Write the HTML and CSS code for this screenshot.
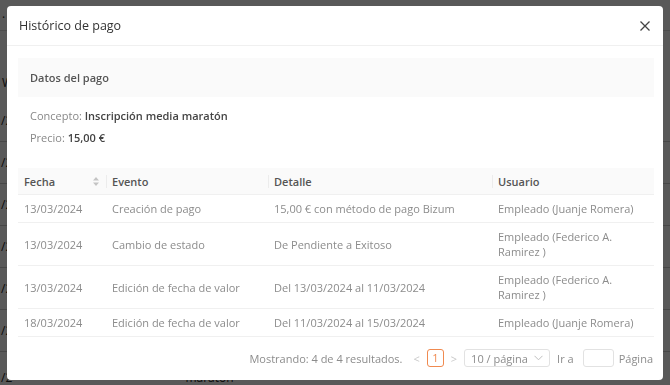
FILE: index.html
```html
<!DOCTYPE html>
<html lang="es">
<head>
    <meta charset="UTF-8">
    <meta name="viewport" content="width=device-width, initial-scale=1.0">
    <title>Histórico de pago</title>
    <link rel="stylesheet" href="styles.css">
</head>
<body>
    <div class="page">
        <div class="page-bar"><span class="page-dot">·</span></div>
        <div class="page-title">W</div>
        <div class="page-row">/2</div>
        <div class="page-row">/2</div>
        <div class="page-row">/2</div>
        <div class="page-row">/2</div>
        <div class="page-row">/2</div>
        <div class="page-row">/2</div>
        <div class="page-row page-last">/2 <span class="page-cell">maratón</span></div>
    </div>

    <div class="mask">
        <div class="modal">
            <div class="modal-header">
                <span class="modal-title">Histórico de pago</span>
                <button type="button" class="modal-close" aria-label="Cerrar">
                    <svg width="12" height="12" viewBox="0 0 12 12"><path d="M1.5 1.5 L10.5 10.5 M10.5 1.5 L1.5 10.5" stroke="#444" stroke-width="1.3" fill="none"/></svg>
                </button>
            </div>
            <div class="modal-body">
                <div class="section-head">Datos del pago</div>
                <div class="info">
                    <p>Concepto: <b>Inscripción media maratón</b></p>
                    <p>Precio: <b>15,00 €</b></p>
                </div>

                <table class="history">
                    <colgroup>
                        <col style="width: 88px">
                        <col style="width: 162px">
                        <col style="width: 224px">
                        <col>
                    </colgroup>
                    <thead>
                        <tr>
                            <th class="sortable">Fecha
                                <span class="sorter">
                                    <svg width="6" height="9" viewBox="0 0 6 9"><path d="M3 0 L6 3.5 H0 Z M3 9 L0 5.5 H6 Z" fill="#c4c4c4"/></svg>
                                </span>
                            </th>
                            <th>Evento</th>
                            <th>Detalle</th>
                            <th>Usuario</th>
                        </tr>
                    </thead>
                    <tbody>
                        <tr>
                            <td>13/03/2024</td>
                            <td>Creación de pago</td>
                            <td>15,00 € con método de pago Bizum</td>
                            <td>Empleado (Juanje Romera)</td>
                        </tr>
                        <tr>
                            <td>13/03/2024</td>
                            <td>Cambio de estado</td>
                            <td>De Pendiente a Exitoso</td>
                            <td>Empleado (Federico A. Ramirez )</td>
                        </tr>
                        <tr>
                            <td>13/03/2024</td>
                            <td>Edición de fecha de valor</td>
                            <td>Del 13/03/2024 al 11/03/2024</td>
                            <td>Empleado (Federico A. Ramirez )</td>
                        </tr>
                        <tr>
                            <td>18/03/2024</td>
                            <td>Edición de fecha de valor</td>
                            <td>Del 11/03/2024 al 15/03/2024</td>
                            <td>Empleado (Juanje Romera)</td>
                        </tr>
                    </tbody>
                </table>

                <div class="pager">
                    <span class="pager-total">Mostrando: 4 de 4 resultados.</span>
                    <span class="pager-arrow">&lt;</span>
                    <span class="pager-item">1</span>
                    <span class="pager-arrow">&gt;</span>
                    <span class="pager-size">10 / página
                        <svg width="9" height="6" viewBox="0 0 9 6"><path d="M0.5 0.8 L4.5 4.8 L8.5 0.8" stroke="#bfbfbf" stroke-width="1" fill="none"/></svg>
                    </span>
                    <span class="pager-jump">Ir a</span>
                    <input type="text" class="pager-input">
                    <span class="pager-page">Página</span>
                </div>
            </div>
        </div>
    </div>
</body>
</html>
```

FILE: styles.css
```css
body {
    margin: 0;
    font-family: "Open Sans", "DejaVu Sans", sans-serif;
    background-color: #fff;
    color: #333;
}

/* page behind the dialog */
.page {
    height: 385px;
    overflow: hidden;
    font-size: 12px;
    color: #222;
}
.page-bar {
    height: 30px;
    border-bottom: 1px solid #ddd;
    line-height: 36px;
    padding-left: 2px;
}
.page-title {
    height: 69px;
    line-height: 104px;
    padding-left: 2px;
}
.page-row {
    height: 41px;
    line-height: 41px;
    border-bottom: 1px solid #ccc;
    padding-left: 1px;
}
.page-last {
    line-height: 52px;
}
.page-cell {
    margin-left: 170px;
}

.mask {
    position: fixed;
    inset: 0;
    background-color: rgba(0, 0, 0, 0.65);
    display: flex;
    justify-content: center;
    align-items: flex-start;
    padding-top: 6px;
}
.modal {
    width: 656px;
    height: 374px;
    background-color: #fff;
    border-radius: 4px;
    overflow: hidden;
}
.modal-header {
    height: 39px;
    display: flex;
    align-items: center;
    justify-content: space-between;
    padding: 0 12px;
    border-bottom: 1px solid #f0f0f0;
}
.modal-title {
    font-size: 12.5px;
    color: #333;
}
.modal-close {
    border: none;
    background: none;
    padding: 0;
    width: 14px;
    height: 14px;
    display: flex;
    align-items: center;
    justify-content: center;
    margin-right: -1px;
}
.modal-body {
    padding: 12px 9px 0 11px;
}
.section-head {
    height: 39px;
    line-height: 39px;
    background-color: #fafafa;
    padding-left: 12px;
    font-size: 11px;
    font-weight: 600;
    color: #555;
}
.info {
    padding: 8px 12px 0;
    font-size: 11px;
    color: #888;
}
.info p {
    margin: 0;
    line-height: 22px;
}
.info b {
    color: #444;
    font-weight: 600;
}

.history {
    width: 100%;
    border-collapse: collapse;
    table-layout: fixed;
    margin-top: 19px;
    font-size: 11px;
}
.history th {
    position: relative;
    height: 26px;
    padding: 0 6px;
    background-color: #fafafa;
    color: #555;
    font-weight: 600;
    text-align: left;
    border-bottom: 1px solid #f0f0f0;
}
.history th + th::before {
    content: "";
    position: absolute;
    left: 0;
    top: 7px;
    height: 13px;
    border-left: 1px solid #ececec;
}
.sorter {
    position: absolute;
    right: 7px;
    top: 9px;
    line-height: 0;
}
.history td {
    padding: 6px;
    line-height: 15px;
    color: #8c8c8c;
    border-bottom: 1px solid #f0f0f0;
    vertical-align: middle;
}

.pager {
    display: flex;
    align-items: center;
    justify-content: flex-end;
    height: 18px;
    margin-top: 12px;
    padding-right: 1px;
    font-size: 11px;
    color: #8c8c8c;
}
.pager-total {
    margin-right: 11px;
}
.pager-arrow {
    color: #c8c8c8;
}
.pager-item {
    width: 15px;
    height: 16px;
    line-height: 16px;
    margin: 0 7px;
    text-align: center;
    border: 1px solid #f08a50;
    border-radius: 3px;
    color: #f08a50;
}
.pager-size {
    display: flex;
    align-items: center;
    justify-content: space-between;
    width: 72px;
    height: 16px;
    margin: 0 7px;
    padding: 0 6px;
    border: 1px solid #e2e2e2;
    border-radius: 3px;
}
.pager-input {
    width: 29px;
    height: 16px;
    padding: 0;
    margin: 0 5px 0 9px;
    border: 1px solid #e2e2e2;
    border-radius: 3px;
}
```
